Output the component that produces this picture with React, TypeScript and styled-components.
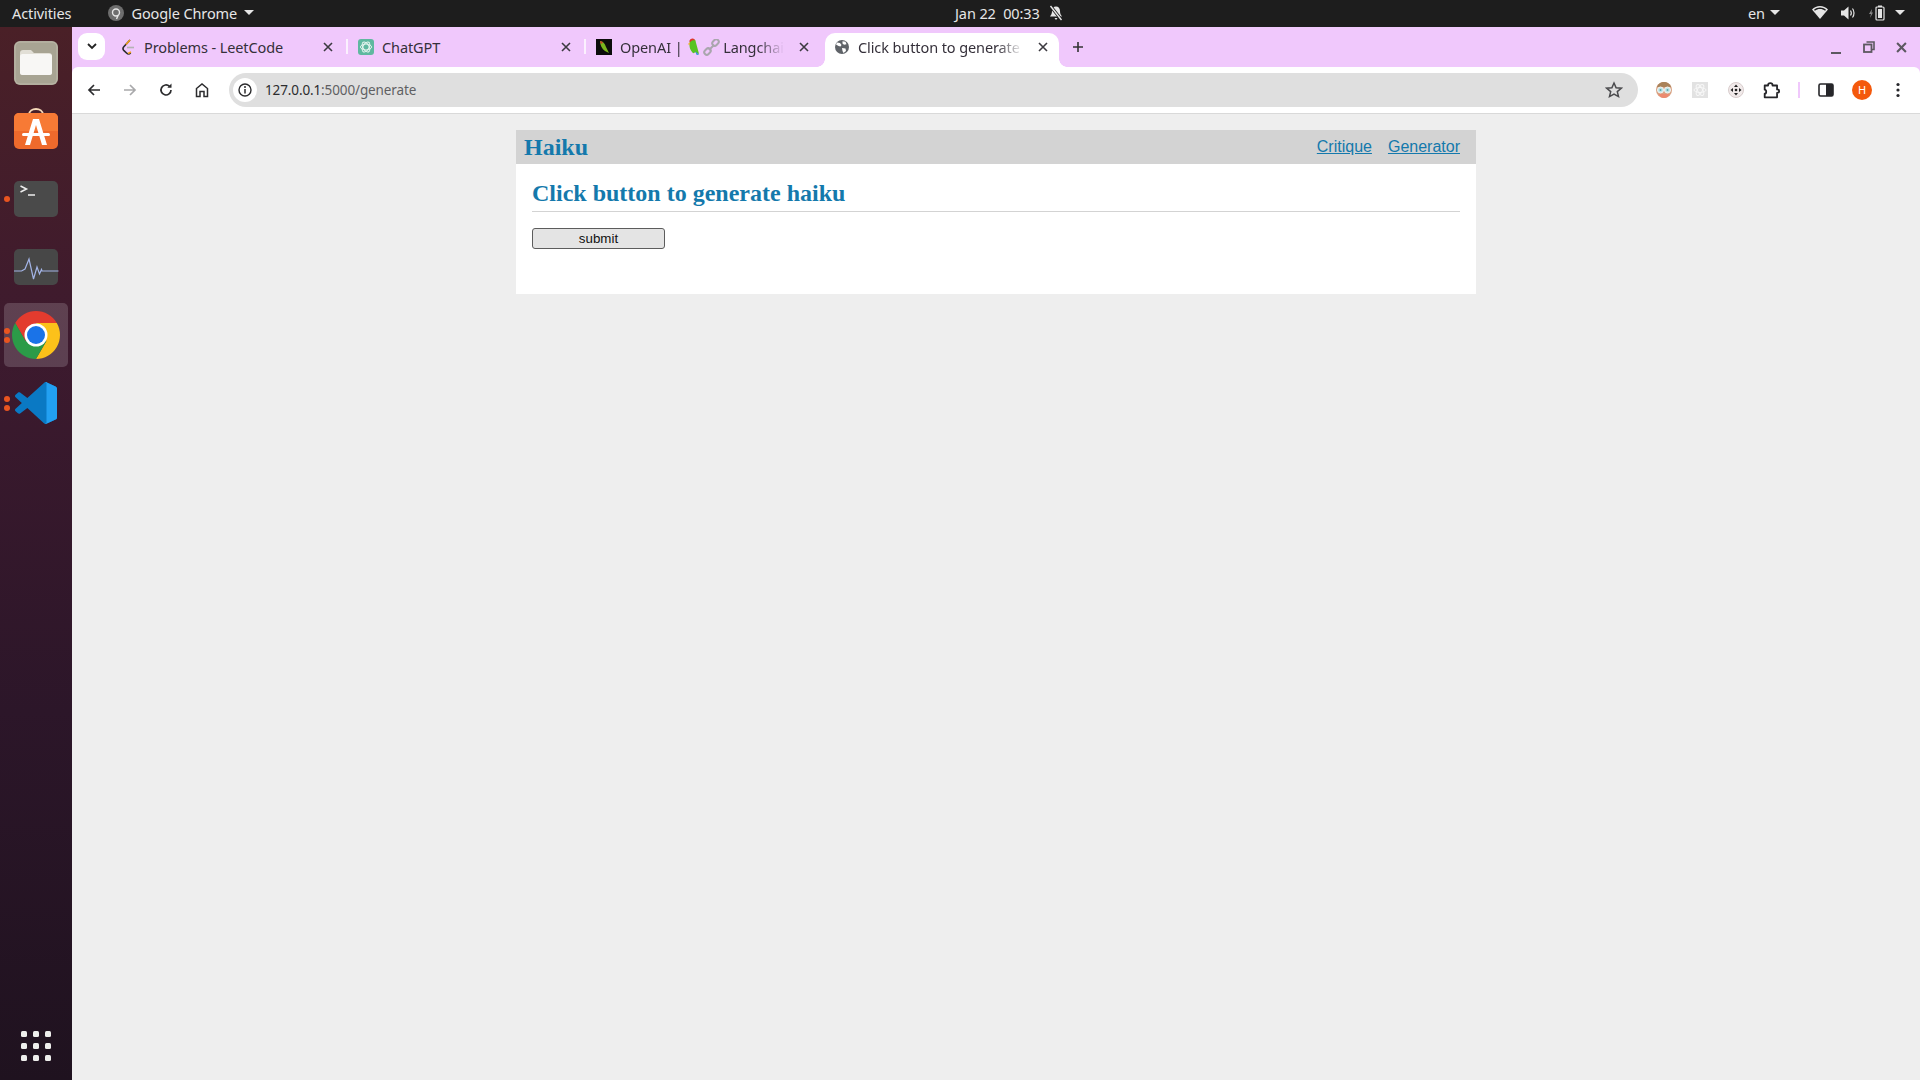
import React from "react";
import styled, { createGlobalStyle } from "styled-components";

const GlobalStyle = createGlobalStyle`
  html, body { margin: 0; padding: 0; height: 100%; background: #eee; }
  #root { height: 100%; }
  * { box-sizing: border-box; }
`;

const Screen = styled.div`
  width: 1920px;
  height: 1080px;
  display: flex;
  flex-direction: column;
  overflow: hidden;
  font-family: "Noto Sans", sans-serif;
`;

/* gnome top bar */
const TopBar = styled.div`
  height: 27px;
  flex: none;
  display: flex;
  align-items: center;
  padding-bottom: 2px;
  background: #1d1d1d;
  color: #e6e6e6;
  font-size: 14.5px;
  letter-spacing: -0.1px;
`;
const LeftGroup = styled.div`
  flex: 0 0 955px;
  display: flex;
  align-items: center;
  padding-left: 12px;
`;
const AppMenu = styled.div`
  display: flex;
  align-items: center;
  margin-left: 37px;
  gap: 7px;
`;
const Clock = styled.div`
  display: flex;
  align-items: center;
  gap: 9px;
  white-space: pre;
`;
const StatusGroup = styled.div`
  margin-left: auto;
  display: flex;
  align-items: center;
  padding-right: 15px;
`;
const Caret = styled.span`
  width: 0;
  height: 0;
  border-left: 5px solid transparent;
  border-right: 5px solid transparent;
  border-top: 5px solid #e6e6e6;
  margin-left: ${(p: { $ml?: number }) => p.$ml ?? 0}px;
`;
const StatusIcon = styled.span<{ $ml: number }>`
  display: flex;
  margin-left: ${(p) => p.$ml}px;
`;

const Desktop = styled.div`
  flex: 1;
  display: flex;
  min-height: 0;
`;

/* ubuntu dock */
const Dock = styled.div`
  width: 72px;
  flex: none;
  display: flex;
  flex-direction: column;
  padding-top: 2px;
  background: linear-gradient(180deg, #4a2027 0%, #3d1a2e 30%, #2c1629 65%, #1f121f 100%);
`;
const DockSlot = styled.div<{ $active?: boolean }>`
  height: 68px;
  flex: none;
  display: flex;
  align-items: center;
  justify-content: center;
  position: relative;
  &::before {
    content: "";
    position: absolute;
    left: 4px;
    right: 4px;
    top: 2px;
    bottom: 2px;
    border-radius: 5px;
    background: ${(p) => (p.$active ? "rgba(255,255,255,0.17)" : "transparent")};
  }
  & > svg {
    position: relative;
    overflow: visible;
  }
`;
const RunDots = styled.div`
  position: absolute;
  left: 4px;
  top: 0;
  bottom: 0;
  z-index: 1;
  display: flex;
  flex-direction: column;
  justify-content: center;
  gap: 3px;
`;
const RunDot = styled.span`
  width: 6px;
  height: 6px;
  border-radius: 50%;
  background: #e95420;
`;
const AppGrid = styled.div`
  margin-top: auto;
  margin-bottom: 19px;
  align-self: center;
  display: grid;
  grid-template-columns: repeat(3, 6px);
  gap: 6px;
`;
const GridDot = styled.span`
  width: 6px;
  height: 6px;
  border-radius: 1.5px;
  background: #eeeeec;
`;

const Browser = styled.div`
  flex: 1;
  min-width: 0;
  display: flex;
  flex-direction: column;
  background: #f0c8fc;
`;

/* tab strip */
const TabStrip = styled.div`
  height: 40px;
  flex: none;
  display: flex;
  align-items: flex-end;
  padding-left: 6px;
`;
const TabSearch = styled.div`
  width: 27px;
  height: 27px;
  align-self: flex-start;
  margin-top: 6px;
  margin-right: 5px;
  border-radius: 9px;
  background: #fff;
  display: flex;
  align-items: center;
  justify-content: center;
`;
const Tab = styled.div<{ $active?: boolean; $sep?: boolean }>`
  position: relative;
  width: ${(p) => (p.$active ? 234 : 238)}px;
  margin-left: ${(p) => (p.$active ? 1 : 0)}px;
  height: 34px;
  flex: none;
  display: flex;
  align-items: center;
  padding: 0 ${(p) => (p.$active ? 8 : 12)}px 6px ${(p) => (p.$active ? 9 : 10)}px;
  gap: 8px;
  border-radius: 10px 10px 0 0;
  background: ${(p) => (p.$active ? "#fff" : "transparent")};
  &::after {
    content: "";
    display: ${(p) => (p.$sep ? "block" : "none")};
    position: absolute;
    right: 0;
    top: 6px;
    width: 2px;
    height: 15px;
    background: #fbf0fe;
  }
`;
const TabCorner = styled.span<{ $side: "left" | "right" }>`
  position: absolute;
  bottom: 0;
  ${(p) => p.$side}: -8px;
  width: 8px;
  height: 8px;
  background: radial-gradient(
    circle at ${(p) => (p.$side === "left" ? "0 0" : "100% 0")},
    transparent 7.5px,
    #fff 8px
  );
`;
const Favicon = styled.span`
  width: 16px;
  height: 16px;
  flex: none;
  display: flex;
  align-items: center;
  justify-content: center;
`;
const TabTitle = styled.div<{ $fade?: boolean }>`
  flex: 1;
  min-width: 0;
  display: flex;
  align-items: center;
  font-size: 14.5px;
  letter-spacing: -0.1px;
  color: #35303a;
  white-space: pre;
  overflow: hidden;
  ${(p) =>
    p.$fade
      ? `mask-image: linear-gradient(90deg, #000 calc(100% - 30px), transparent calc(100% - 4px));`
      : ""}
`;
const Emoji = styled.span<{ $ml: number }>`
  display: flex;
  flex: none;
  margin-left: ${(p) => p.$ml}px;
`;
const TabClose = styled.span`
  width: 16px;
  height: 16px;
  flex: none;
  display: flex;
  align-items: center;
  justify-content: center;
`;
const NewTab = styled.div`
  width: 28px;
  height: 28px;
  margin-left: 5px;
  align-self: flex-start;
  margin-top: 6px;
  display: flex;
  align-items: center;
  justify-content: center;
`;
const WindowControls = styled.div`
  margin-left: auto;
  align-self: center;
  display: flex;
  padding-right: 2px;
`;
const WinBtn = styled.div`
  width: 33px;
  height: 24px;
  display: flex;
  align-items: center;
  justify-content: center;
`;

/* address bar row */
const Toolbar = styled.div`
  height: 47px;
  flex: none;
  display: flex;
  align-items: center;
  padding: 0 4px 1px;
  background: #fff;
  border-bottom: 1px solid #d9d9d9;
  border-radius: 6px 6px 0 0;
`;
const ToolBtn = styled.div`
  width: 36px;
  height: 36px;
  flex: none;
  display: flex;
  align-items: center;
  justify-content: center;
`;
const Omnibox = styled.div`
  flex: 1;
  height: 34px;
  margin: 0 8px 0 9px;
  padding: 0 15px 0 4px;
  display: flex;
  align-items: center;
  border-radius: 17px;
  background: #dfdfdf;
`;
const InfoChip = styled.div`
  width: 24px;
  height: 24px;
  border-radius: 50%;
  background: #fff;
  display: flex;
  align-items: center;
  justify-content: center;
`;
const UrlText = styled.div`
  margin-left: 8px;
  flex: 1;
  font-size: 13.5px;
  letter-spacing: -0.12px;
  color: #5f5f63;
  & b {
    font-weight: 400;
    color: #2c2c2e;
  }
`;
const ToolSep = styled.div`
  width: 2px;
  height: 16px;
  margin: 0 8px;
  background: #f0c8fc;
`;
const Avatar = styled.div`
  width: 20px;
  height: 20px;
  border-radius: 50%;
  background: #f4590c;
  color: #fff;
  font-size: 11px;
  display: flex;
  align-items: center;
  justify-content: center;
`;

/* the page itself */
const Viewport = styled.div`
  flex: 1;
  padding-top: 16px;
  background: #eee;
`;
const Page = styled.div`
  width: 960px;
  margin: 0 auto;
  background: #fff;
  font-family: "Liberation Sans", Arial, sans-serif;
`;
const Nav = styled.nav`
  display: flex;
  align-items: center;
  padding: 0 8px;
  background: #d3d3d3;
`;
const Brand = styled.h1`
  flex: auto;
  margin: 0;
  font: bold 24px "Liberation Serif", "Times New Roman", serif;
  color: #1479ac;
`;
const NavList = styled.ul`
  display: flex;
  margin: 0;
  padding: 0;
  list-style: none;
`;
const NavLink = styled.a`
  display: block;
  padding: 8px;
  font-size: 16px;
  color: #1479ac;
  text-decoration: underline;
`;
const Content = styled.section`
  padding: 0 16px 45px;
`;
const ContentHeader = styled.header`
  border-bottom: 1px solid #d3d3d3;
`;
const Title = styled.h1`
  margin: 16px 0 4px;
  font: bold 24px "Liberation Serif", "Times New Roman", serif;
  color: #1479ac;
`;
const GenerateForm = styled.form`
  margin: 16px 0 0;
`;
const Submit = styled.button`
  display: block;
  width: 133px;
  height: 21px;
  padding: 0;
  border: 1px solid #5c5c5c;
  border-radius: 3px;
  background: #e4e4e4;
  color: #111;
  font: 13.33px "Liberation Sans", Arial, sans-serif;
`;

const X = ({ size = 10, color = "#3c3a40", w = 1.6 }: { size?: number; color?: string; w?: number }) => (
  <svg width={size} height={size} viewBox="0 0 10 10">
    <path d="M1 1l8 8M9 1l-8 8" stroke={color} strokeWidth={w} fill="none" />
  </svg>
);

const Arrow = ({ color, flip }: { color: string; flip?: boolean }) => (
  <svg width="16" height="16" viewBox="0 0 16 16" style={flip ? { transform: "scaleX(-1)" } : undefined}>
    <path d="M14 8H3M8 3L3 8l5 5" stroke={color} strokeWidth="1.7" fill="none" />
  </svg>
);

const GlobeIcon = () => (
  <svg width="14" height="14" viewBox="0 0 14 14">
    <circle cx="7" cy="7" r="7" fill="#5f6368" />
    <path d="M2 2.5l3 .5 1.5 2-1 1.5-2-.5L1 4.5zM7.5 1.2l3 .6 1 2.4-2.5.6-1.5-1.4zM7 8l3.5.5.5 2.5L8.5 13 7.5 11z" fill="#fff" />
  </svg>
);

const Parrot = () => (
  <svg width="15" height="19" viewBox="0 0 16 20">
    <path d="M5 4c0-2 2-3.500 4-3 1.500.4 2.500 1.500 2.500 3L15 17l-4-2-2 1C6 14 4 9 5 4z" fill="#58c322" />
    <path d="M4.500 3.500C5 1.500 7 0 9 .6c1 .3 1.500 1 1.500 2-1.500-.6-3.500-.3-4.500 1.400z" fill="#e0352b" />
    <path d="M5 4.500L3 6.500l2.300.6z" fill="#f2b01e" />
    <path d="M11 14l4 3.500-2.500.5z" fill="#2b8fd6" />
  </svg>
);

const LinkEmoji = () => (
  <svg width="17" height="17" viewBox="0 0 17 17">
    <g fill="none" stroke="#a9a6ad" strokeWidth="2">
      <rect x="9" y="1" width="7" height="5" rx="2.500" transform="rotate(-45 12.500 3.500)" />
      <rect x="1" y="10" width="7" height="5" rx="2.500" transform="rotate(-45 4.500 12.500)" />
      <path d="M6 11l5-5" />
    </g>
  </svg>
);

const FilesIcon = () => (
  <svg width="44" height="44" viewBox="0 0 44 44">
    <rect width="44" height="44" rx="6" fill="#a8a493" />
    <rect x="1" y="1" width="42" height="42" rx="5" fill="none" stroke="#bdb9aa" />
    <path d="M6 12c0-1.700 1.300-3 3-3h8l3 3h15c1.700 0 3 1.300 3 3v16c0 1.700-1.300 3-3 3H9c-1.700 0-3-1.300-3-3z" fill="#e2dfd6" />
    <rect x="6" y="13" width="32" height="21" rx="2.500" fill="#f8f7f5" />
  </svg>
);

const StoreIcon = () => (
  <svg width="44" height="36" viewBox="0 7 44 36">
    <path d="M15 9c0-8 14-8 14 0" fill="none" stroke="#f5d9b8" strokeWidth="2" />
    <rect y="7" width="44" height="36" rx="5" fill="#ef6a2c" />
    <path d="M0 12c0-2.800 2.200-5 5-5h34c2.800 0 5 2.200 5 5v13H0z" fill="#f77a35" />
    <path d="M19 13h6l8 26h-5l-6-20-6 20h-5z" fill="#fff" />
    <rect x="8" y="27" width="28" height="3" rx="1.500" fill="#fff" />
  </svg>
);

const TerminalIcon = () => (
  <svg width="44" height="36" viewBox="0 0 44 36">
    <rect width="44" height="36" rx="5" fill="#4a4a4a" />
    <path d="M6.500 5l6 3-6 3" fill="none" stroke="#eee" strokeWidth="1.500" />
    <path d="M14 14h7" stroke="#eee" strokeWidth="1.500" />
  </svg>
);

const MonitorIcon = () => (
  <svg width="44" height="36" viewBox="0 0 44 36">
    <rect width="44" height="36" rx="5" fill="#474747" />
    <path d="M0 22h7.500l3.500-2L15 10l4.500 20 3.500-12 2.500 7 2-4.500.5 1.500h16.500" fill="none" stroke="#a3b4e6" strokeWidth="1.200" />
  </svg>
);

const ChromeIcon = () => (
  <svg width="48" height="48" viewBox="0 0 48 48">
    <path d="M44.780 12A24 24 0 0 0 3.220 12L13.600 30 24 12z" fill="#e33b2e" />
    <path d="M24 48A24 24 0 0 0 44.780 12H24l10.400 18z" fill="#fcc11a" />
    <path d="M3.220 12A24 24 0 0 0 24 48l10.400-18H13.600z" fill="#2b9b48" />
    <circle cx="24" cy="24" r="11.500" fill="#fff" />
    <circle cx="24" cy="24" r="9" fill="#1a73e8" />
  </svg>
);

const VsCodeIcon = () => (
  <svg width="42" height="42" viewBox="0 0 100 100">
    <path
      d="M71 99.300c1.600.6 3.400.6 5-.2l20.600-9.900c2.200-1 3.400-3.100 3.400-5.500V16.300c0-2.400-1.400-4.500-3.500-5.600L75.900.9c-2-1-4.400-.8-6.300.6-.2.2-.5.4-.7.6L29.400 38.100 12.200 25c-1.600-1.200-3.800-1.100-5.300.3l-5.500 5c-1.800 1.600-1.800 4.500 0 6.100L16.300 50 1.400 63.600c-1.800 1.600-1.800 4.500 0 6.100l5.500 5c1.500 1.400 3.700 1.500 5.300.3l17.200-13.100L68.900 98.100c.6.600 1.300 1 2.100 1.200zM75 27.300 45 50l30 22.700V27.300z"
      fill="#0a79c4"
    />
    <path
      d="M69.600 1.500c2-1.400 4.300-1.600 6.300-.6l20.600 9.800c2.100 1.100 3.500 3.200 3.500 5.600v67.400c0 2.400-1.200 4.500-3.400 5.500L76 99.100c-2 .9-4.400.7-6-.9 2.500 2 5 .1 5-2.500V4c0-2.600-3-4.400-5.400-2.500z"
      fill="#22a0f2"
    />
  </svg>
);

const tabs = [
  {
    title: "Problems - LeetCode",
    icon: (
      <svg width="14" height="16" viewBox="0 0 14 16">
        <path d="M9 1L3 7.500c-1.200 1.300-1.200 3 0 4.200L5.500 14c1.200 1.100 3 1.100 4.200 0" fill="none" stroke="#2b2b2b" strokeWidth="1.600" />
        <path d="M9 1L5 5.500" fill="none" stroke="#f0a017" strokeWidth="1.600" />
        <path d="M6 8.500h7" stroke="#b3b3b3" strokeWidth="1.600" />
        <path d="M7 14.500l3-1.500" stroke="#f0a017" strokeWidth="1.600" />
      </svg>
    ),
    sep: true,
  },
  {
    title: "ChatGPT",
    icon: (
      <svg width="16" height="16" viewBox="0 0 16 16">
        <rect width="16" height="16" rx="3" fill="#5fb8a0" />
        <g fill="none" stroke="#e7f5f0" strokeWidth="1">
          <ellipse cx="8" cy="8" rx="5.500" ry="3" />
          <ellipse cx="8" cy="8" rx="5.500" ry="3" transform="rotate(60 8 8)" />
          <ellipse cx="8" cy="8" rx="5.500" ry="3" transform="rotate(120 8 8)" />
        </g>
      </svg>
    ),
    sep: true,
  },
];

export default function App() {
  return (
    <Screen>
      <GlobalStyle />
      <TopBar>
        <LeftGroup>
          <span>Activities</span>
          <AppMenu>
            <svg width="16" height="16" viewBox="0 0 16 16">
              <circle cx="8" cy="8" r="8" fill="#6e6e6e" />
              <circle cx="8" cy="7.500" r="3.500" fill="none" stroke="#e6e6e6" strokeWidth="1.400" />
              <path d="M10 10.500L8.500 14" stroke="#e6e6e6" strokeWidth="1.400" />
            </svg>
            <span>Google Chrome</span>
            <Caret />
          </AppMenu>
        </LeftGroup>
        <Clock>
          <span>Jan 22  00:33</span>
          <svg width="14" height="16" viewBox="0 0 14 16">
            <path d="M7 1.500c-2.500 0-4 2-4 4.500 0 2.500-.8 4-2 5.500h12c-1.200-1.500-2-3-2-5.500 0-2.500-1.500-4.500-4-4.500zM5.500 13h3L7 15z" fill="#e6e6e6" />
            <path d="M1.500 1l11 14" stroke="#1d1d1d" strokeWidth="3" />
            <path d="M1.500 1l11 14" stroke="#e6e6e6" strokeWidth="1.400" />
          </svg>
        </Clock>
        <StatusGroup>
          <span>en</span>
          <Caret $ml={5} />
          <StatusIcon $ml={32}>
            <svg width="16" height="13" viewBox="0 0 16 13">
              <path d="M8 13L0 3.500C2 1.300 5 0 8 0s6 1.300 8 3.500z" fill="#e6e6e6" />
              <path d="M2 3.700C3.700 2.300 5.800 1.500 8 1.500s4.300.8 6 2.200l-.9 1C11.700 3.600 9.900 3 8 3s-3.700.6-5.100 1.700z" fill="#1d1d1d" />
            </svg>
          </StatusIcon>
          <StatusIcon $ml={13}>
            <svg width="15" height="14" viewBox="0 0 15 14">
              <path d="M0 4.500h3L7.500.5v13L3 9.500H0z" fill="#e6e6e6" />
              <path d="M9.500 4.500c1 1.500 1 3.500 0 5M11.500 2.500c2 2.500 2 6.500 0 9" fill="none" stroke="#e6e6e6" strokeWidth="1.200" />
            </svg>
          </StatusIcon>
          <StatusIcon $ml={13}>
            <svg width="16" height="16" viewBox="0 0 16 16">
              <path d="M3 4L0 9h2l-1 4 3-5.500H2.500z" fill="#8a8a8a" />
              <rect x="7" y="2" width="8" height="13" rx="1" fill="none" stroke="#e6e6e6" strokeWidth="1.200" />
              <rect x="9" y="0.500" width="4" height="1.500" fill="#e6e6e6" />
              <rect x="9" y="4" width="4" height="9" fill="#e6e6e6" />
            </svg>
          </StatusIcon>
          <Caret $ml={10} />
        </StatusGroup>
      </TopBar>

      <Desktop>
        <Dock>
          <DockSlot><FilesIcon /></DockSlot>
          <DockSlot><StoreIcon /></DockSlot>
          <DockSlot>
            <RunDots><RunDot /></RunDots>
            <TerminalIcon />
          </DockSlot>
          <DockSlot><MonitorIcon /></DockSlot>
          <DockSlot $active>
            <RunDots><RunDot /><RunDot /></RunDots>
            <ChromeIcon />
          </DockSlot>
          <DockSlot>
            <RunDots><RunDot /><RunDot /></RunDots>
            <VsCodeIcon />
          </DockSlot>
          <AppGrid>
            {Array.from({ length: 9 }).map((_, i) => (
              <GridDot key={i} />
            ))}
          </AppGrid>
        </Dock>

        <Browser>
          <TabStrip>
            <TabSearch>
              <svg width="10" height="7" viewBox="0 0 10 7">
                <path d="M1 1l4 4 4-4" stroke="#222" strokeWidth="1.800" fill="none" />
              </svg>
            </TabSearch>
            {tabs.map((t) => (
              <Tab key={t.title} $sep={t.sep}>
                <Favicon>{t.icon}</Favicon>
                <TabTitle>{t.title}</TabTitle>
                <TabClose><X /></TabClose>
              </Tab>
            ))}
            <Tab>
              <Favicon>
                <svg width="16" height="16" viewBox="0 0 16 16">
                  <rect width="16" height="16" fill="#0c0c0c" />
                  <path d="M4 2c3 0 5 3 6 6l3 6-4-2C6 10 4 6 4 2z" fill="#7ab51d" />
                  <path d="M4 2c1 0 2 .5 3 1.500L5 5z" fill="#d43a2a" />
                </svg>
              </Favicon>
              <TabTitle $fade>
                <span>OpenAI |</span>
                <Emoji $ml={2}><Parrot /></Emoji>
                <Emoji $ml={3}><LinkEmoji /></Emoji>
                <span> Langchain</span>
              </TabTitle>
              <TabClose><X /></TabClose>
            </Tab>
            <Tab $active>
              <TabCorner $side="left" />
              <Favicon><GlobeIcon /></Favicon>
              <TabTitle $fade>Click button to generate haiku</TabTitle>
              <TabClose><X /></TabClose>
              <TabCorner $side="right" />
            </Tab>
            <NewTab>
              <svg width="12" height="12" viewBox="0 0 12 12">
                <path d="M6 1v10M1 6h10" stroke="#333" strokeWidth="1.600" />
              </svg>
            </NewTab>
            <WindowControls>
              <WinBtn>
                <svg width="12" height="12" viewBox="0 0 12 12" style={{ marginTop: 8 }}>
                  <path d="M1 8h10" stroke="#5c5860" strokeWidth="2" />
                </svg>
              </WinBtn>
              <WinBtn>
                <svg width="12" height="12" viewBox="0 0 12 12">
                  <path d="M3.500 1h7.500v7.500H9" fill="none" stroke="#5c5860" strokeWidth="1.600" />
                  <rect x="1" y="3.500" width="7.500" height="7.500" fill="none" stroke="#5c5860" strokeWidth="1.800" />
                </svg>
              </WinBtn>
              <WinBtn><X size={11} color="#5c5860" w={1.9} /></WinBtn>
            </WindowControls>
          </TabStrip>

          <Toolbar>
            <ToolBtn><Arrow color="#2c2c2e" /></ToolBtn>
            <ToolBtn><Arrow color="#a9a9ab" flip /></ToolBtn>
            <ToolBtn>
              <svg width="16" height="16" viewBox="0 0 16 16">
                <path d="M13 8a5 5 0 1 1-1.500-3.600" fill="none" stroke="#2c2c2e" strokeWidth="1.700" />
                <path d="M13.500 1.500v4.200H9.300z" fill="#2c2c2e" />
              </svg>
            </ToolBtn>
            <ToolBtn>
              <svg width="16" height="16" viewBox="0 0 16 16">
                <path d="M2.500 14.500V6.500L8 2l5.500 4.500v8H10v-5H6v5z" fill="none" stroke="#2c2c2e" strokeWidth="1.500" />
              </svg>
            </ToolBtn>
            <Omnibox>
              <InfoChip>
                <svg width="14" height="14" viewBox="0 0 14 14">
                  <circle cx="7" cy="7" r="6" fill="none" stroke="#2c2c2e" strokeWidth="1.400" />
                  <path d="M7 6v4.500" stroke="#2c2c2e" strokeWidth="1.500" />
                  <circle cx="7" cy="4" r="1" fill="#2c2c2e" />
                </svg>
              </InfoChip>
              <UrlText><b>127.0.0.1</b>:5000/generate</UrlText>
              <svg width="18" height="18" viewBox="0 0 18 18">
                <path d="M9 2l2.100 4.700 5.100.5-3.900 3.400 1.200 5L9 13l-4.500 2.600 1.200-5L1.800 7.200l5.100-.5z" fill="none" stroke="#4a4a4d" strokeWidth="1.500" />
              </svg>
            </Omnibox>
            <ToolBtn>
              <svg width="16" height="18" viewBox="0 0 16 18">
                <circle cx="8" cy="9" r="8" fill="#d8a283" />
                <path d="M1 6c1-3.500 4-5 7-5s6 1.500 7 5z" fill="#a9825a" />
                <path d="M2.500 13c1 2.500 3 4 5.500 4s4.500-1.500 5.500-4z" fill="#ec8a70" />
                <circle cx="4.500" cy="9" r="3" fill="#bfe6e8" stroke="#f4f4f4" />
                <circle cx="11.500" cy="9" r="3" fill="#bfe6e8" stroke="#f4f4f4" />
                <circle cx="4.500" cy="9" r="1" fill="#5aa6ae" />
                <circle cx="11.500" cy="9" r="1" fill="#5aa6ae" />
              </svg>
            </ToolBtn>
            <ToolBtn>
              <svg width="16" height="16" viewBox="0 0 16 16">
                <rect width="16" height="16" fill="#e2e2e2" />
                <g fill="none" stroke="#f7f7f7" strokeWidth="1">
                  <ellipse cx="8" cy="8" rx="6" ry="2.500" />
                  <ellipse cx="8" cy="8" rx="6" ry="2.500" transform="rotate(60 8 8)" />
                  <ellipse cx="8" cy="8" rx="6" ry="2.500" transform="rotate(120 8 8)" />
                </g>
              </svg>
            </ToolBtn>
            <ToolBtn>
              <svg width="16" height="16" viewBox="0 0 16 16">
                <circle cx="8" cy="8" r="7.500" fill="#f1eaea" stroke="#d8cccc" />
                <path d="M8 2.500l2 2.500H6zM8 13.500l2-2.500H6zM2.500 8L5 6v4zM13.500 8L11 6v4z" fill="#222" />
                <circle cx="8" cy="8" r="1.300" fill="#222" />
              </svg>
            </ToolBtn>
            <ToolBtn>
              <svg width="18" height="18" viewBox="0 0 16 16">
                <path d="M1.500 4h3c0-2.800 4-2.800 4 0h4v3.500c2.500 0 2.500 3 0 3V14.500h-11v-3.300c1.800 0 1.800-3.500 0-3.500z" fill="none" stroke="#26262a" strokeWidth="1.600" strokeLinejoin="round" />
              </svg>
            </ToolBtn>
            <ToolSep />
            <ToolBtn>
              <svg width="16" height="14" viewBox="0 0 16 14">
                <rect x="1" y="1" width="14" height="12" rx="1.500" fill="none" stroke="#26262a" strokeWidth="1.600" />
                <rect x="8" y="1" width="7" height="12" fill="#26262a" />
              </svg>
            </ToolBtn>
            <ToolBtn><Avatar>H</Avatar></ToolBtn>
            <ToolBtn>
              <svg width="4" height="16" viewBox="0 0 4 16">
                <circle cx="2" cy="2.500" r="1.600" fill="#26262a" />
                <circle cx="2" cy="8" r="1.600" fill="#26262a" />
                <circle cx="2" cy="13.500" r="1.600" fill="#26262a" />
              </svg>
            </ToolBtn>
          </Toolbar>

          <Viewport>
            <Page>
              <Nav>
                <Brand>Haiku</Brand>
                <NavList>
                  <li><NavLink href="#">Critique</NavLink></li>
                  <li><NavLink href="#">Generator</NavLink></li>
                </NavList>
              </Nav>
              <Content>
                <ContentHeader>
                  <Title>Click button to generate haiku</Title>
                </ContentHeader>
                <GenerateForm onSubmit={(e) => e.preventDefault()}>
                  <Submit>submit</Submit>
                </GenerateForm>
              </Content>
            </Page>
          </Viewport>
        </Browser>
      </Desktop>
    </Screen>
  );
}
